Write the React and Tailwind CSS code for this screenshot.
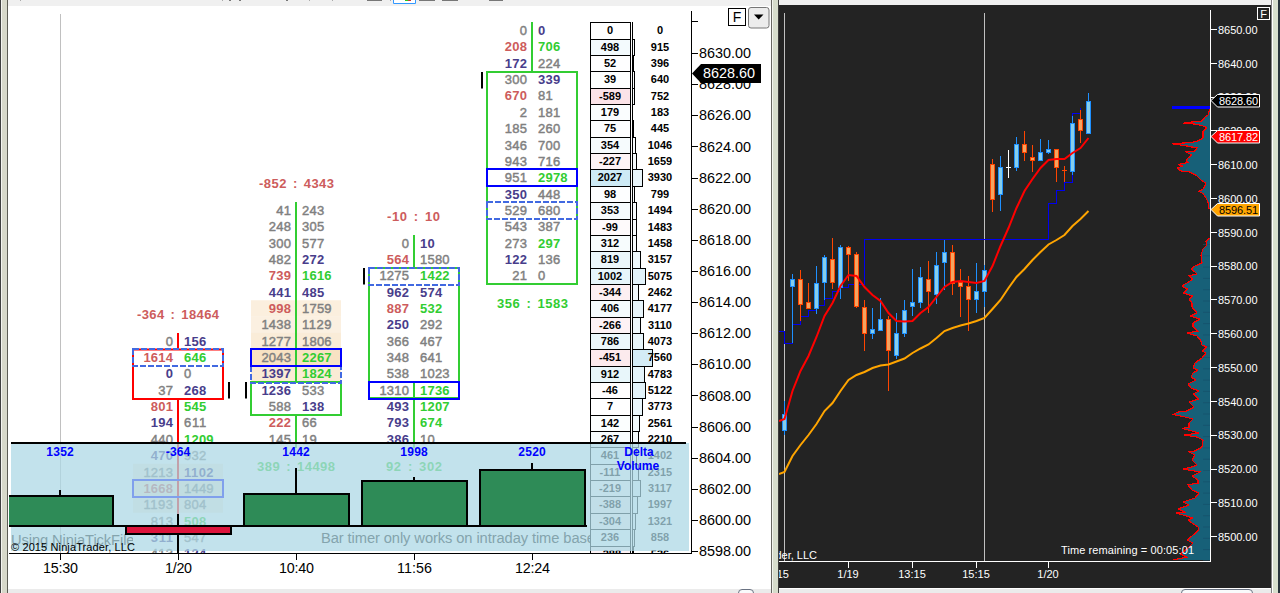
import React from 'react';

const ROW = 16.35;
const TOP = 22.3;
const rowY = (i) => TOP + i * ROW;

const INK = { g: '#808080', r: '#cd5c5c', n: '#483d8b', G: '#32cd32' };

// every cell is "value + tone": g gray, r red, n navy, G green
const clusters = [
  {
    x: 178, start: 19, color: '#ff0000',
    rows: '0g 156n|1614r 646G|0n 0g|37g 268n|801r 545G|194n 611g|440g 1209G|470n 932g|1213g 1102n|1668r 1449g|1193g 804g|813g 508G|311n 547g|413g 124n',
    wicks: [[333, 349.5], [399, 553]], body: [349.5, 399], poc: 28, dash: 20,
    shade: [[27, 0.5], [28, 0.7], [29, 0.5]], marks: [[229, 382]],
    title: { text: '-364 : 18464', x: 137, w: 82, y: 314.3, fill: '#cd5c5c' },
  },
  {
    x: 296, start: 11, color: '#32cd32',
    rows: '41g 243g|248g 305g|300g 577g|482g 272n|739r 1616G|441n 485n|998r 1759g|1438g 1129g|1277g 1806g|2043g 2267G|1397n 1824G|1236n 533g|588g 138n|222r 66g|145g 19g',
    wicks: [[202, 382], [415, 448]], body: [382, 415], poc: 20, dash: 21,
    shade: [[17, 0.55], [18, 0.5], [19, 0.65], [20, 1], [21, 0.7]], marks: [[246, 382]],
    title: { text: '-852 : 4343', x: 259, w: 75, y: 183.3, fill: '#cd5c5c' },
    foot: { text: '389 : 14498', x: 257, w: 78, y: 466.3, fill: '#32cd32' },
  },
  {
    x: 414, start: 13, color: '#32cd32',
    rows: '0g 10n|564r 1580g|1275g 1422G|962n 574n|887r 532G|250n 292g|366g 467g|348g 641g|538g 1023g|1310g 1736G|493n 1207G|793n 674G|386n 10g',
    wicks: [[235, 268], [383, 448]], body: [268, 398], poc: 22, dash: 15,
    shade: [], marks: [[364, 268]],
    title: { text: '-10 : 10', x: 387, w: 53, y: 216.3, fill: '#cd5c5c' },
    foot: { text: '92 : 302', x: 386, w: 56, y: 466.3, fill: '#32cd32' },
  },
  {
    x: 532, start: 0, color: '#32cd32',
    rows: '0g 0n|208r 706G|172n 224g|300g 339n|670r 81g|2g 181g|185g 260g|346g 700g|943g 716g|951g 2978G|350n 448g|529g 680g|543g 387g|273g 297G|122n 136g|21g 0g',
    wicks: [[22, 72]], body: [72, 284], poc: 9, dash: 11,
    shade: [], marks: [[482, 72]],
    title: { text: '356 : 1583', x: 497, w: 71, y: 303.3, fill: '#32cd32' },
  },
];

const profile = [
  [0, 0], [498, 915], [52, 396], [39, 640], [-589, 752], [179, 183], [75, 445], [354, 1046],
  [-227, 1659], [2027, 3930], [98, 799], [353, 1494], [-99, 1483], [312, 1458], [819, 3157],
  [1002, 5075], [-344, 2462], [406, 4177], [-266, 3110], [786, 4073], [-451, 7560], [912, 4783],
  [-46, 5122], [7, 3773], [142, 2561], [267, 2210], [461, 1402], [-111, 2315], [-219, 3117],
  [-388, 1997], [-304, 1321], [236, 858], [-288, 536],
];

const deltaBars = [
  { x: 60, y: 496, h: 30, wick: [490, 496], label: '1352' },
  { x: 178, y: 526, h: 8, wick: [514, 553], label: '-364', down: true },
  { x: 296, y: 494, h: 32, wick: [468, 494], label: '1442' },
  { x: 414, y: 481, h: 45, wick: [477, 481], label: '1998' },
  { x: 532, y: 470, h: 56, wick: [463, 470], label: '2520' },
];

const leftTimes = [[60, '15:30', 35], [178, '1/20', 27], [296, '10:40', 35], [414, '11:56', 35], [532, '12:24', 35]];

// [dir, wick top, wick bottom, body top, body bottom]
const candles = [
  ['u', 401, 435, 414, 431], ['u', 274, 343, 279, 287], ['d', 270, 321, 279, 305],
  ['d', 283, 309, 302, 309], ['u', 266, 314, 283, 309], ['u', 255, 300, 257, 283],
  ['d', 238, 289, 259, 283], ['u', 245, 299, 247, 288], ['d', 246, 281, 247, 255],
  ['d', 252, 308, 254, 307], ['d', 300, 351, 307, 334], ['u', 308, 339, 329, 334],
  ['u', 298, 331, 319, 331], ['d', 316, 391, 319, 351], ['u', 313, 359, 333, 356],
  ['u', 300, 337, 310, 334], ['u', 269, 316, 302, 307], ['u', 267, 308, 277, 303],
  ['d', 261, 313, 279, 292], ['u', 252, 304, 265, 295], ['u', 240, 290, 252, 263],
  ['d', 245, 295, 252, 284], ['d', 269, 317, 282, 287], ['d', 276, 331, 286, 300],
  ['u', 263, 313, 291, 300], ['u', 265, 307, 270, 292], ['d', 159, 212, 164, 200],
  ['u', 156, 211, 167, 195], ['w', 150, 178, 167, 168], ['u', 137, 171, 144, 168],
  ['d', 131, 161, 144, 153], ['d', 145, 172, 157, 161], ['u', 139, 161, 152, 161],
  ['u', 140, 154, 149, 153], ['d', 149, 182, 149, 168], ['d', 166, 182, 170, 171],
  ['u', 116, 175, 123, 172], ['d', 110, 143, 119, 131], ['u', 93, 134, 101, 134],
];

const fastMa = [
  419, 391, 371, 356, 337, 316, 303, 286, 275, 276, 287, 295, 301, 313, 321, 321.5, 321, 313, 307,
  297, 287, 282, 281, 282, 283, 281, 266, 246, 228, 208, 191, 179, 168, 160, 159, 159, 153, 148, 138,
];
const slowMa = [
  472, 456, 445, 435, 424, 411, 403, 391, 380, 375, 372, 368, 365.5, 364.5, 361.5, 358.5, 353,
  348.5, 344.5, 338, 331, 328, 325.5, 323.5, 321, 318, 309, 300, 288, 277, 269, 260, 252, 244.5,
  240, 235, 226, 219, 211,
];
const toPoints = (start, values) =>
  `779,${start} ` + values.map((v, i) => `${784.5 + i * 8},${v}`).join(' ');

const upperVolume =
  '1210,108 1208,115 1205,117 1202,121 1187,122.5 1183,123.5 1192,123.7 1200,125 1206,127 1206,129 1203,131 1203,138 1198,141 1192,142.5 1172,143.7 1187,146 1197,148 1195,151 1186,152 1192,155 1188,158 1186,161 1188,162.5 1178,164.5 1183,166 1177,168 1181,171 1190,172 1197,176 1201,180 1205.5,183 1205,186 1203,189 1199,191.5 1203,193.5 1206,198 1208,202 1209,209';
const lowerVolume =
  '1210,238 1206,241 1207,245 1203,249 1201,255 1202,263 1195,266 1191,269 1195,272 1197,274 1189,276 1193,279 1187,283 1183,285 1183,287 1188,289 1183,293 1193,296 1189,299 1192,303 1192,307 1197,313 1190,316 1200,319 1193,323 1193,327 1198,331 1187,333 1197,336 1201,341 1202,345 1207,347 1202,351 1206,353 1202,358 1195,363 1193,368 1198,370 1193,373 1191,377 1196,380 1188,384 1191,388 1199,391 1193,394 1199,399 1189,402 1194,407 1187,411 1178,412 1173,414.5 1183,416.5 1193,419 1189,423 1189,427 1182,428.5 1192,431 1199,433 1184,435 1197,437 1203,440 1202,447 1195,451 1189,452 1195,455 1192,460 1197,465 1192,467 1183,469 1200,472 1192,476 1198,480 1198,483 1188,485 1192,490 1199,493 1195,498 1189,500 1183,502 1189,505 1178,509 1185,512 1176,513 1183,515 1193,518 1188,520 1192,523 1198,527 1199,530 1192,536 1187,540 1193,543 1188,548 1183,552 1180,554 1187,557 1173,560';

// text placed by the vertical centre of its capitals
function Label({ x, y, size = 11, w, children, ...rest }) {
  return (
    <text
      x={x}
      y={y + size * 0.36}
      fontSize={size}
      textLength={w}
      style={{ whiteSpace: 'pre' }}
      {...rest}
    >
      {children}
    </text>
  );
}

function Cell({ x, y, value, anchor }) {
  const tone = value.slice(-1);
  const text = value.slice(0, -1);
  const gray = tone === 'g';
  return (
    <Label
      x={x}
      y={y}
      size={13}
      w={text.length * 7.4}
      textAnchor={anchor}
      fill={INK[tone]}
      fontWeight={gray ? 400 : 700}
      stroke={gray ? INK.g : 'none'}
      strokeWidth={gray ? 0.45 : 0}
    >
      {text}
    </Label>
  );
}

function Cluster({ c }) {
  const left = c.x - 45;
  return (
    <g>
      {c.shade.map(([i, o]) => (
        <rect key={i} x={left} y={rowY(i)} width={90} height={ROW} fill="#f8e2c3" opacity={o} />
      ))}
      {c.wicks.map(([a, b]) => (
        <line key={a} x1={c.x} x2={c.x} y1={a} y2={b} stroke={c.color} strokeWidth={2} />
      ))}
      <rect x={left} y={c.body[0]} width={90} height={c.body[1] - c.body[0]} fill="none" stroke={c.color} strokeWidth={2} />
      <rect x={left} y={Math.round(rowY(c.dash))} width={90} height={17} fill="none" stroke="#4169e1" strokeWidth={2} strokeDasharray="6 2" />
      <rect x={left} y={Math.round(rowY(c.poc))} width={90} height={17} fill="none" stroke="#0000ff" strokeWidth={2} />
      {c.marks.map(([x, y]) => (
        <line key={x} x1={x} x2={x} y1={y} y2={y + 16.5} stroke="#000" strokeWidth={2} />
      ))}
      {c.rows.split('|').map((row, i) => {
        const [bid, ask] = row.split(' ');
        const y = rowY(c.start + i) + 8.1;
        return (
          <g key={i}>
            <Cell x={c.x - 5} y={y} value={bid} anchor="end" />
            <Cell x={c.x + 6} y={y} value={ask} anchor="start" />
          </g>
        );
      })}
      {[c.title, c.foot].filter(Boolean).map((t) => (
        <Label key={t.text} x={t.x} y={t.y} size={13} w={t.w} fill={t.fill} fontWeight={700} wordSpacing={2}>
          {t.text}
        </Label>
      ))}
    </g>
  );
}

function DeltaLadder() {
  return (
    <g fontWeight={700}>
      {profile.map(([delta, volume], i) => {
        const y = Math.round(rowY(i)) + 0.5;
        const h = Math.round(rowY(i + 1)) + 0.5 - y;
        const w = Math.round(volume * 0.0026);
        return (
          <g key={i}>
            <rect
              x={590.5}
              y={y}
              width={40}
              height={h}
              fill={delta < 0 ? '#fbe3e8' : '#cdeaf5'}
              fillOpacity={Math.min(1, Math.abs(delta) / (delta < 0 ? 589 : 2027))}
              stroke="#000"
            />
            {w > 0 && (
              <rect x={632.5} y={y} width={w} height={h} fill="#d4ecf6" fillOpacity={volume / 7560} stroke="#000" />
            )}
            <Label x={610} y={y + 8} textAnchor="middle">{delta}</Label>
            <Label x={660} y={y + 8} textAnchor="middle">{volume}</Label>
          </g>
        );
      })}
      <line x1={632.5} x2={632.5} y1={22} y2={553} stroke="#000" />
    </g>
  );
}

function FootprintChart() {
  return (
    <svg className="block shrink-0 bg-white" width="763" height="583" viewBox="8 6 763 583">
      <defs>
        <clipPath id="plot"><rect x="8" y="6" width="683" height="547" /></clipPath>
        <clipPath id="noteLeft"><rect x="8" y="520" width="125" height="33" /></clipPath>
        <clipPath id="noteRight"><rect x="300" y="520" width="290" height="33" /></clipPath>
      </defs>
      <line x1={60.5} x2={60.5} y1={14} y2={553} stroke="#c0c0c0" />
      <g clipPath="url(#plot)">
        {clusters.map((c) => <Cluster key={c.x} c={c} />)}
        <DeltaLadder />
      </g>

      <rect x={11} y={443} width={678} height={108} fill="#add8e6" opacity={0.74} />
      <g clipPath="url(#noteLeft)" fill="#84a4ad">
        <Label x={11} y={539.5} size={14.7} w={123.5}>Using NinjaTickFile</Label>
      </g>
      <g clipPath="url(#noteRight)" fill="#84a4ad">
        <Label x={321} y={538} size={14.7} w={282}>Bar timer only works on intraday time based</Label>
      </g>
      <rect x={11} y={442} width={675} height={2} />
      {deltaBars.map((b) => (
        <g key={b.x}>
          {b.x === 60 ? (
            <g>
              <rect x={9} y={b.y} width={104} height={b.h} fill="#2e8b57" />
              <path d="M9 496H113V526" fill="none" stroke="#000" strokeWidth={2} />
            </g>
          ) : (
            <rect x={b.x - 52} y={b.y} width={105} height={b.h} fill={b.down ? '#dc143c' : '#2e8b57'} stroke="#000" strokeWidth={2} />
          )}
          {/* the falling bar covers the part of its wick that crosses it */}
          {b.down ? (
            <path d="M178 514V526M178 535V553" stroke="#000" strokeWidth={2} />
          ) : (
            <line x1={b.x} x2={b.x} y1={b.wick[0]} y2={b.wick[1]} stroke="#000" strokeWidth={2} />
          )}
          <Label x={b.x} y={451.7} size={12} w={b.down ? 24.5 : 27.5} textAnchor="middle" fill="#0000ff" fontWeight={700}>
            {b.label}
          </Label>
        </g>
      ))}
      <rect x={9} y={525} width={578} height={2} />
      <g fill="#0000ff" fontWeight={700} textAnchor="middle">
        <Label x={639} y={451.7} size={12}>Delta</Label>
        <Label x={638} y={465.7} size={12}>Volume</Label>
      </g>
      <Label x={11} y={547} size={11} w={124}>© 2015 NinjaTrader, LLC</Label>

      <path d="M9 553.5H691.5M691.5 11V554M691 21.5H698" fill="none" stroke="#000" />
      {leftTimes.map(([x, t, w]) => (
        <g key={t}>
          <line x1={x + 0.5} x2={x + 0.5} y1={553} y2={560} stroke="#000" />
          <Label x={x + 0.5} y={568} size={14.3} w={w} textAnchor="middle">{t}</Label>
        </g>
      ))}
      {Array.from({ length: 17 }, (_, i) => {
        const y = 53 + i * 31.13;
        return (
          <g key={i}>
            <line x1={691} x2={698} y1={Math.round(y) + 0.5} y2={Math.round(y) + 0.5} stroke="#000" />
            <Label x={699} y={y} size={14.4} w={52}>{(8630 - i * 2).toFixed(2)}</Label>
          </g>
        );
      })}
      <path d="M692 73.5L701 64H761V83H701Z" />
      <Label x={703} y={73} size={14.4} w={52} fill="#fff">8628.60</Label>

      <rect x={728.5} y={8.5} width={17} height={17} fill="#fff" stroke="#000" />
      <Label x={737} y={17} size={14} textAnchor="middle">F</Label>
      <rect x={748.5} y={7.5} width={20.5} height={20.5} rx={2.5} fill="#ececec" stroke="#777" />
      <path d="M754 14.5H763.5L758.7 19.5Z" />
    </svg>
  );
}

function PriceTag({ y, fill, color, children }) {
  return (
    <g>
      <path d={`M1211 ${y}L1217.5 ${y - 6}H1259.5V${y + 6.5}H1217.5Z`} fill={fill} stroke="#fff" />
      <Label x={1219} y={y + 0.5} w={39} fill={color}>{children}</Label>
    </g>
  );
}

function CandleChart() {
  return (
    <svg className="block shrink-0 bg-[#232323]" width="492" height="583" viewBox="779 5 492 583">
      <path d="M784.5 13V561M984.5 13V561" stroke="#c0c0c0" />
      <path
        d="M779 331.5H784.5V343.5H792.5V324.5H800.5V316.5H808.5V310.5H816.5V305.5H824.5V298.5H832.5V291.5H840.5V287.5H848.5V284.5H864.5V239.5H1048.5V203.5H1056.5V190.5H1064.5V182.5H1072.5V113.5H1080.5V108"
        fill="none"
        stroke="#0000f0"
        shapeRendering="crispEdges"
      />
      {candles.map(([dir, hi, lo, top, bottom], i) => {
        const x = 784.5 + i * 8;
        const line = dir === 'u' ? '#1e90ff' : dir === 'd' ? '#ff4500' : '#ffffff';
        const fill = dir === 'u' ? '#87ceeb' : '#f4a460';
        return (
          <g key={i} stroke={line}>
            <line x1={x} x2={x} y1={hi} y2={lo} />
            {bottom - top < 2 ? (
              <line x1={x - 2.5} x2={x + 2.5} y1={top + 0.5} y2={top + 0.5} />
            ) : (
              <rect x={x - 2} y={top + 0.5} width={4} height={bottom - top - 1} fill={fill} />
            )}
          </g>
        );
      })}
      <polyline points={toPoints(474, slowMa)} fill="none" stroke="#ffa500" strokeWidth={2} />
      <polyline points={toPoints(421, fastMa)} fill="none" stroke="#ff0000" strokeWidth={2} />

      <polygon points={`${upperVolume} 1210,209`} fill="#176078" />
      <polygon points={`${lowerVolume} 1210,560`} fill="#176078" />
      {Array.from({ length: 29 }, (_, i) => (
        <line key={i} x1={1203} x2={1210} y1={244.5 + i * 11.3} y2={244.5 + i * 11.3} stroke="#15506a" strokeWidth={0.7} />
      ))}
      <g fill="none" stroke="#ff0000" shapeRendering="crispEdges" strokeWidth={1.2}>
        <polyline points={upperVolume} />
        <polyline points={lowerVolume} />
      </g>
      <rect x={1172} y={106} width={38} height={3} fill="#0000ff" />

      <g fill="#fff">
        <path d="M779 561.5H1211M1210.5 10V562" stroke="#fff" />
        {Array.from({ length: 16 }, (_, i) => {
          const y = 29.5 + i * 33.81;
          return (
            <g key={i}>
              <line x1={1210} x2={1217} y1={Math.floor(y) + 0.5} y2={Math.floor(y) + 0.5} stroke="#fff" />
              <Label x={1218} y={y + 0.3} w={39.5}>{(8650 - i * 10).toFixed(2)}</Label>
            </g>
          );
        })}
        {[[848, '1/19'], [912, '13:15'], [976, '15:15'], [1048, '1/20']].map(([x, t]) => (
          <g key={t}>
            <line x1={x + 0.5} x2={x + 0.5} y1={561} y2={568} stroke="#fff" />
            <Label x={x} y={574.5} textAnchor="middle">{t}</Label>
          </g>
        ))}
        <Label x={789} y={574.5} textAnchor="end">15</Label>
        <Label x={817} y={555.5} textAnchor="end">der, LLC</Label>
        <Label x={1061} y={550.5} w={133}>Time remaining = 00:05:01</Label>
      </g>
      <PriceTag y={100.5} fill="#000" color="#fff">8628.60</PriceTag>
      <PriceTag y={136.5} fill="#ff0000" color="#fff">8617.82</PriceTag>
      <PriceTag y={209.5} fill="#ffa500" color="#000">8596.51</PriceTag>
      <rect x={1257.5} y={7.5} width={12} height={12} fill="none" stroke="#fff" />
      <Label x={1263.5} y={14} textAnchor="middle" fill="#fff">F</Label>
    </svg>
  );
}

function ToolbarRemains() {
  return (
    <svg className="block shrink-0 bg-[#f0f0f0]" width="763" height="6" viewBox="8 0 763 6">
      <path d="M20.5 0V1M222.5 0V1M309.5 0V1M332.5 0V1M390.5 0V1" stroke="#aaa" />
      <path d="M229 .5H231M239 .5H241M286 .5H288M367 .5H382M419 .5H435M442 .5H458M489 .5H503" stroke="#777" />
      <path d="M393.5 0V3.5H415.5V0" fill="#fff" stroke="#3399ff" />
      <path d="M405 .5H408" stroke="#22cc22" />
      <path d="M408 .5H411" stroke="#cc3333" />
    </svg>
  );
}

export default function App() {
  return (
    <div className="flex h-[593px] w-[1280px] overflow-hidden bg-[#232323] font-['Liberation_Sans',Arial,sans-serif]">
      <div className="w-2 shrink-0 border-l border-r border-l-[#404040] border-r-[#5c5c54] bg-[#d7d8ca]">
        <div className="h-full w-px bg-[#f4f4f0]" />
      </div>
      <div className="flex w-[763px] shrink-0 flex-col">
        <ToolbarRemains />
        <FootprintChart />
        <div className="flex h-1 shrink-0 items-start justify-end overflow-hidden bg-[#ebebeb] pr-[17px]">
          <div className="h-2 w-4 shrink-0 rounded-sm border border-gray-500 bg-gray-50" />
        </div>
      </div>
      <div className="w-2 shrink-0 border-l border-r border-l-[#666660] border-r-[#3c3c3c] bg-[#d6dccb]">
        <div className="h-full w-px bg-[#f2f4ee]" />
      </div>
      <div className="flex w-[492px] shrink-0 flex-col">
        <div className="h-[5px] shrink-0 bg-[#f0f0f0]" />
        <CandleChart />
        <div className="flex h-[5px] shrink-0 items-start justify-end overflow-hidden border-t border-white bg-[#ebebeb] pr-[18px]">
          <div className="h-2 w-[72px] shrink-0 rounded-sm border border-gray-500 bg-gray-50" />
        </div>
      </div>
      <div className="flex w-[9px] shrink-0 border-l border-[#808080] bg-[#d7dfcd]">
        <div className="w-px bg-white" />
        <div className="ml-auto w-0.5 bg-[#28343c]" />
      </div>
    </div>
  );
}
